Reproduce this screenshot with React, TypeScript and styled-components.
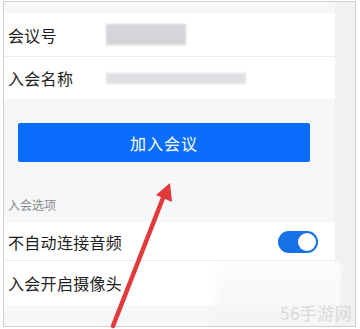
import React from 'react'
import styled, { createGlobalStyle } from 'styled-components'

const GlobalStyle = createGlobalStyle`
  html, body {
    margin: 0;
    padding: 0;
    background: #ffffff;
  }
  body {
    font-family: "Noto Sans CJK SC", "Noto Sans", sans-serif;
  }
`

const Page = styled.div`
  position: relative;
  width: 360px;
  height: 329px;
  overflow: hidden;
  background: #ffffff;
  padding: 1px 4px 2px 3px;
  box-sizing: border-box;
`

const Frame = styled.div`
  height: 100%;
  box-sizing: border-box;
  border: 1px solid #cfcfcf;
  display: grid;
  grid-template-columns: 1fr 20px;
  background: #f6f7f9;
`

const SideStrip = styled.div`
  background: #f0f1f3;
`

const Content = styled.div`
  display: flex;
  flex-direction: column;
  padding-top: 11px;
`

const Group = styled.div`
  background: #ffffff;
  display: flex;
  flex-direction: column;
`

const Row = styled.div<{ $h: number; $last?: boolean }>`
  height: ${p => p.$h}px;
  display: flex;
  align-items: center;
  padding: 0 17px 0 4px;
  border-bottom: ${p => (p.$last ? 'none' : '1px solid #ececee')};
`

const Label = styled.span<{ $w?: number }>`
  width: ${p => (p.$w ? `${p.$w}px` : 'auto')};
  font-size: 16px;
  color: #1e1e1e;
  letter-spacing: 0.3px;
`

const Blur = styled.div<{ $w: number; $h: number; $c: string }>`
  width: ${p => p.$w}px;
  height: ${p => p.$h}px;
  background: ${p => p.$c};
  filter: blur(1px);
`

const ButtonArea = styled.div`
  padding: 24px 25px 0 14px;
  display: flex;
  flex-direction: column;
`

const JoinButton = styled.button`
  height: 39px;
  border: none;
  border-radius: 2px;
  background: #0a6dfb;
  color: #ffffff;
  font-family: inherit;
  font-size: 16px;
  letter-spacing: 1px;
`

const SectionTitle = styled.div`
  padding: 34px 0 10px 4px;
  font-size: 12px;
  line-height: 17px;
  color: #8a8a8a;
`

const Spacer = styled.div`
  flex: 1;
`

const Toggle = styled.div<{ $on: boolean }>`
  margin-left: auto;
  width: 40px;
  height: 22px;
  border-radius: 11px;
  background: ${p => (p.$on ? '#1670e6' : '#dcdcdc')};
  position: relative;
  &::after {
    content: '';
    position: absolute;
    top: 2px;
    left: ${p => (p.$on ? '20px' : '2px')};
    width: 18px;
    height: 18px;
    border-radius: 50%;
    background: #ffffff;
  }
`

const WatermarkPatch = styled.div`
  position: absolute;
  left: 216px;
  top: 262px;
  width: 125px;
  height: 56px;
  background: linear-gradient(180deg, #fdfdfd 0%, #f8f8f8 70%, #f3f3f3 100%);
  filter: blur(2px);
`

const WatermarkText = styled.div`
  position: absolute;
  left: 280px;
  top: 300px;
  font-size: 17px;
  color: #dadada;
  font-family: "Noto Sans CJK SC", sans-serif;
  letter-spacing: 0.5px;
`

const ArrowLayer = styled.svg`
  position: absolute;
  left: 0;
  top: 0;
  pointer-events: none;
`

export default function App() {
  return (
    <Page>
      <GlobalStyle />
      <Frame>
        <Content>
          <Group>
            <Row $h={43}>
              <Label $w={98}>会议号</Label>
              <Blur $w={80} $h={21} $c="#d4d4d9" />
            </Row>
            <Row $h={42} $last>
              <Label $w={98}>入会名称</Label>
              <Blur $w={140} $h={11} $c="#e0e0e4" />
            </Row>
          </Group>
          <ButtonArea>
            <JoinButton>加入会议</JoinButton>
          </ButtonArea>
          <SectionTitle>入会选项</SectionTitle>
          <Group>
            <Row $h={37}>
              <Label>不自动连接音频</Label>
              <Toggle $on />
            </Row>
            <Row $h={44} $last>
              <Label>入会开启摄像头</Label>
            </Row>
          </Group>
          <Spacer />
        </Content>
        <SideStrip />
      </Frame>
      <WatermarkPatch />
      <WatermarkText>56手游网</WatermarkText>
      <ArrowLayer width="360" height="329" viewBox="0 0 360 329">
        <line x1="113" y1="326" x2="163" y2="198" stroke="#e23a3a" strokeWidth="4.5" strokeLinecap="round" />
        <polygon points="170,183 156,195 172,202" fill="#e23a3a" />
      </ArrowLayer>
    </Page>
  )
}
